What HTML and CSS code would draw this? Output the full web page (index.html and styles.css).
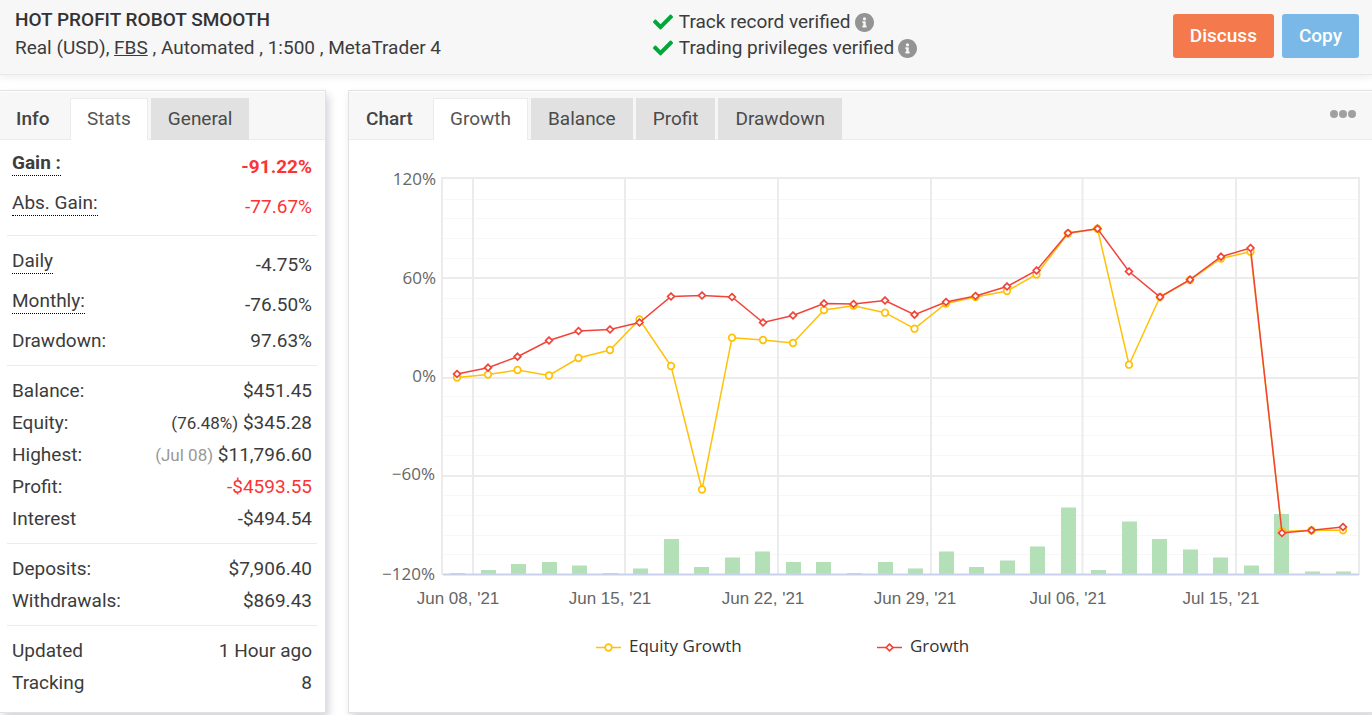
FILE: index.html
```html
<!DOCTYPE html>
<html lang="en">
<head>
<meta charset="utf-8">
<title>Hot Profit Robot Smooth</title>
<link rel="stylesheet" href="styles.css">
</head>
<body>
<svg class="defs" aria-hidden="true">
  <symbol id="check" viewBox="0 0 512 512"><path d="M173.898 439.404l-166.4-166.4c-9.997-9.997-9.997-26.206 0-36.204l36.203-36.204c9.997-9.998 26.207-9.998 36.204 0L192 312.69 432.095 72.596c9.997-9.997 26.207-9.997 36.204 0l36.203 36.204c9.997 9.997 9.997 26.206 0 36.204l-294.4 294.401c-9.998 9.997-26.207 9.997-36.204-.001z"/></symbol>
  <symbol id="info" viewBox="8 8 496 496"><path d="M256 8C119.043 8 8 119.083 8 256c0 136.997 111.043 248 248 248s248-111.003 248-248C504 119.083 392.957 8 256 8zm0 110c23.196 0 42 18.804 42 42s-18.804 42-42 42-42-18.804-42-42 18.804-42 42-42zm56 254c0 6.627-5.373 12-12 12h-88c-6.627 0-12-5.373-12-12v-24c0-6.627 5.373-12 12-12h12v-64h-12c-6.627 0-12-5.373-12-12v-24c0-6.627 5.373-12 12-12h64c6.627 0 12 5.373 12 12v100h12c6.627 0 12 5.373 12 12v24z"/></symbol>
</svg>

<header class="header">
  <div class="account">
    <h1 class="title">HOT PROFIT ROBOT SMOOTH</h1>
    <p class="details">Real (USD), <a href="#">FBS</a> , Automated , 1:500 , MetaTrader 4</p>
  </div>
  <ul class="checks">
    <li><svg class="check-icon"><use href="#check"/></svg>Track record verified<svg class="info-icon"><use href="#info"/></svg></li>
    <li><svg class="check-icon"><use href="#check"/></svg>Trading privileges verified<svg class="info-icon"><use href="#info"/></svg></li>
  </ul>
  <div class="actions">
    <button class="btn btn-discuss" type="button">Discuss</button>
    <button class="btn btn-copy" type="button">Copy</button>
  </div>
</header>

<main class="main">
  <section class="panel info-panel">
    <div class="tabbar">
      <h2 class="tab-title">Info</h2>
      <button class="tab active" type="button">Stats</button>
      <button class="tab" type="button">General</button>
    </div>
    <dl class="group first">
      <div class="row tall strong"><dt>Gain :</dt><dd class="red">-91.22%</dd></div>
      <div class="row tall"><dt>Abs. Gain:</dt><dd class="red">-77.67%</dd></div>
    </dl>
    <dl class="group">
      <div class="row tall"><dt>Daily</dt><dd>-4.75%</dd></div>
      <div class="row tall"><dt>Monthly:</dt><dd>-76.50%</dd></div>
      <div class="row"><dt>Drawdown:</dt><dd>97.63%</dd></div>
    </dl>
    <dl class="group">
      <div class="row"><dt>Balance:</dt><dd>$451.45</dd></div>
      <div class="row"><dt>Equity:</dt><dd><small>(76.48%)</small> $345.28</dd></div>
      <div class="row"><dt>Highest:</dt><dd><small class="muted">(Jul 08)</small> $11,796.60</dd></div>
      <div class="row"><dt>Profit:</dt><dd class="red">-$4593.55</dd></div>
      <div class="row"><dt>Interest</dt><dd>-$494.54</dd></div>
    </dl>
    <dl class="group">
      <div class="row"><dt>Deposits:</dt><dd>$7,906.40</dd></div>
      <div class="row"><dt>Withdrawals:</dt><dd>$869.43</dd></div>
    </dl>
    <dl class="group last">
      <div class="row"><dt>Updated</dt><dd>1 Hour ago</dd></div>
      <div class="row"><dt>Tracking</dt><dd>8</dd></div>
    </dl>
  </section>

  <section class="panel chart-panel">
    <div class="tabbar">
      <h2 class="tab-title">Chart</h2>
      <button class="tab active" type="button">Growth</button>
      <button class="tab" type="button">Balance</button>
      <button class="tab" type="button">Profit</button>
      <button class="tab" type="button">Drawdown</button>
      <button class="more" type="button" aria-label="More"><svg viewBox="0 0 26 8"><circle cx="4" cy="4" r="4"/><circle cx="13" cy="4" r="4"/><circle cx="22" cy="4" r="4"/></svg></button>
    </div>
    <svg class="chart" viewBox="349 140 1023 572" role="img" aria-label="Growth chart">
      <defs>
        <marker id="dot" markerUnits="userSpaceOnUse" markerWidth="10" markerHeight="10" refX="5" refY="5"><circle class="dot" cx="5" cy="5" r="3.3"/></marker>
        <marker id="diamond" markerUnits="userSpaceOnUse" markerWidth="10" markerHeight="10" refX="5" refY="5"><path class="diamond" d="M5 1.6L8.4 5L5 8.4L1.6 5z"/></marker>
      </defs>
      <path class="minor" d="M442 199.500H1359M442 218.500H1359M442 238.500H1359M442 258.500H1359M442 298.500H1359M442 318.500H1359M442 337.500H1359M442 357.500H1359M442 396.500H1359M442 416.500H1359M442 435.500H1359M442 455.500H1359M442 495.500H1359M442 515.500H1359M442 535.500H1359M442 554.500H1359"/>
      <path class="major" d="M442 178H1359M442 278H1359M442 378H1359M442 476H1359"/>
      <path class="major" d="M442 177V575M473 178V575M625 178V575M778 178V575M931 178V575M1082.500 178V575M1236 178V575M1359 177V575"/>
      <path class="bars" d="M450 573h15V575h-15zM481 570h15V575h-15zM511 564h15V575h-15zM542 562h15V575h-15zM572 565.500h15V575h-15zM603 573h15V575h-15zM633 568.500h15V575h-15zM664 539h15V575h-15zM694 567h15V575h-15zM725 557.500h15V575h-15zM755 551.500h15V575h-15zM786 562h15V575h-15zM816 562h15V575h-15zM847 573h15V575h-15zM878 562h15V575h-15zM908 568.500h15V575h-15zM939 551.500h15V575h-15zM969 567h15V575h-15zM1000 560.500h15V575h-15zM1030 546.500h15V575h-15zM1061 507.500h15V575h-15zM1091 570h15V575h-15zM1122 521.500h15V575h-15zM1152 539h15V575h-15zM1183 549.500h15V575h-15zM1213 557.500h15V575h-15zM1244 565.500h15V575h-15zM1274 514h15V575h-15zM1305 571.500h15V575h-15zM1336 571.500h15V575h-15z"/>
      <path class="axis" d="M443 574.500H1359"/>
      <polyline class="equity" points="457,377.500 488,374.500 517.500,370 549,375.500 578.500,358 610,350 639.500,319.500 671,366 702,489.500 732,337.700 763,340 793,343 824,310 853.500,305.700 885,312.700 914.500,328.700 946,303.500 975.500,297 1007,291 1036.500,274.500 1068,233.500 1097.500,228.700 1129,364.700 1160,297 1190,280 1221,258.500 1250.500,251.700 1282,531.500 1311.500,530.300 1343,530.300"/>
      <polyline class="growth" points="457,374 488,367.700 517.500,356.700 549,340.500 578.500,331 610,329.500 639.500,322.500 671,296.500 702,295.500 732,297 763,322.500 793,315.500 824,303.500 853.500,304 885,300.500 914.500,314.700 946,302 975.500,296 1007,286.500 1036.500,270.500 1068,233 1097.500,228.700 1129,271.500 1160,297 1190,279.700 1221,256.700 1250.500,248 1282,533 1311.500,530.300 1343,527"/>
      <g class="ylabels">
        <text x="436" y="185">120%</text>
        <text x="436" y="284">60%</text>
        <text x="436" y="382">0%</text>
        <text x="435" y="480">−60%</text>
        <text x="435" y="580">−120%</text>
      </g>
      <g class="xlabels">
        <text x="458" y="604">Jun 08, '21</text>
        <text x="610" y="604">Jun 15, '21</text>
        <text x="763" y="604">Jun 22, '21</text>
        <text x="915" y="604">Jun 29, '21</text>
        <text x="1068" y="604">Jul 06, '21</text>
        <text x="1221" y="604">Jul 15, '21</text>
      </g>
      <polyline class="equity key" points="596,647.500 608.500,647.500 621,647.500"/>
      <polyline class="growth key" points="877,647.500 889.500,647.500 902,647.500"/>
      <g class="legend">
        <text x="629" y="652">Equity Growth</text>
        <text x="910" y="652">Growth</text>
      </g>
    </svg>
  </section>
</main>
</body>
</html>
```
FILE: styles.css
```css
* {
  box-sizing: border-box;
}

body {
  min-height: 100vh;
  margin: 0;
  background: #fff;
  color: #3c3c3c;
  font-family: Roboto, "Liberation Sans", sans-serif;
  font-size: 19px;
  line-height: 26px;
}

h1, h2, p, ul, dl, dd {
  margin: 0;
}

button {
  border: 0;
  font: inherit;
  cursor: pointer;
}

.defs {
  display: none;
}

.header {
  display: grid;
  grid-template-columns: 11fr 9fr auto;
  height: 75px;
  padding: 0 13px 0 15px;
  background: #f7f7f7;
  border-bottom: 1px solid #e8e8e8;
  box-shadow: 0 2px 8px rgba(0, 0, 0, 0.08);
}

.account {
  padding-top: 6px;
}

.title {
  color: #333;
  font-size: 19px;
  font-weight: 500;
  line-height: 28px;
}

.details {
  line-height: 28px;
}

.details a {
  color: inherit;
}

.checks {
  padding: 9px 0 0 1px;
  list-style: none;
}

.checks li {
  display: flex;
  align-items: center;
}

.check-icon {
  width: 20px;
  height: 20px;
  margin-right: 6px;
  fill: #00a839;
}

.info-icon {
  width: 19px;
  height: 19px;
  margin-left: 4px;
  fill: #949494;
}

.actions {
  display: flex;
  gap: 8px;
  padding-top: 14px;
}

.btn {
  height: 44px;
  padding: 0 17px;
  border-radius: 3px;
  color: #fff;
  font-weight: 500;
}

.btn-discuss {
  background: #f4794c;
}

.btn-copy {
  background: #7ab9e7;
}

.main {
  display: grid;
  grid-template-columns: 326px minmax(0, 1fr);
  gap: 22px;
  padding: 15px 0 8px;
}

.panel {
  border: 1px solid #e2e2e4;
  background: #fff;
  box-shadow: 3px 5px 8px rgba(50, 40, 80, 0.2);
}

.info-panel {
  border-left: 0;
}

.chart-panel {
  border-right: 0;
}

.tabbar {
  display: flex;
  align-items: flex-end;
  height: 49px;
  border-bottom: 1px solid #ebebeb;
  border-top: 1px solid #fff;
  background: #f7f7f7;
}

.tab-title {
  width: 70px;
  padding-left: 16px;
  color: #444;
  font-size: 19px;
  font-weight: 500;
  line-height: 40px;
}

.chart-panel .tab-title {
  width: 84px;
  padding-left: 17px;
}

.tab {
  height: 42px;
  margin: 0 3px -1px 0;
  padding: 0 17px;
  background: #e1e1e1;
  color: #4a4a4a;
}

.tab.active {
  padding: 0 16px 1px;
  border: 1px solid #ebebeb;
  border-bottom: 0;
  background: #fff;
  color: #555;
}

.more {
  align-self: center;
  width: 26px;
  height: 8px;
  margin: 0 16px 3px auto;
  padding: 0;
  background: none;
}

.more svg {
  display: block;
  fill: #a0a0a0;
}

.group {
  margin: 0 8px 0 7px;
  padding: 9px 5px 8px;
  border-bottom: 1px solid #ebebeb;
}

.group.first {
  padding-top: 7px;
}

.group.last {
  padding-bottom: 13px;
  border-bottom: 0;
}

.row {
  display: flex;
  align-items: center;
  justify-content: space-between;
  height: 32px;
}

.row.tall {
  height: 40px;
}

.row.tall dt {
  align-self: flex-start;
  margin-top: 4px;
  border-bottom: 1px dotted #000;
  line-height: 24px;
}

.row.strong {
  font-weight: 700;
}

.row small {
  font-size: 17px;
}

.red {
  color: #fb3434;
}

.muted {
  color: #999;
}

.chart {
  display: block;
  width: 100%;
  height: auto;
}

.minor {
  stroke: #f7f7f7;
}

.major {
  stroke: #ebebeb;
  stroke-width: 2;
}

.bars {
  fill: #b4e0b7;
}

.axis {
  stroke: #c9d2ec;
  stroke-width: 2;
}

.equity, .growth {
  fill: none;
  stroke-width: 1.5;
}

.equity {
  stroke: #ffc107;
  marker: url(#dot);
}

.growth {
  stroke: #f0443a;
  marker: url(#diamond);
}

.key {
  marker-start: none;
  marker-end: none;
}

.dot {
  fill: #fff;
  stroke: #ffc107;
  stroke-width: 1.7;
}

.diamond {
  fill: #fff;
  stroke: #f0443a;
  stroke-width: 1.7;
}

.ylabels {
  fill: #666;
  font: 17px "Open Sans", "Noto Sans", sans-serif;
  text-anchor: end;
}

.xlabels {
  fill: #666;
  font: 17px "Liberation Sans", Arial, sans-serif;
  text-anchor: middle;
}

.legend {
  fill: #333;
  font: 17px "Open Sans", "Noto Sans", sans-serif;
}
```
